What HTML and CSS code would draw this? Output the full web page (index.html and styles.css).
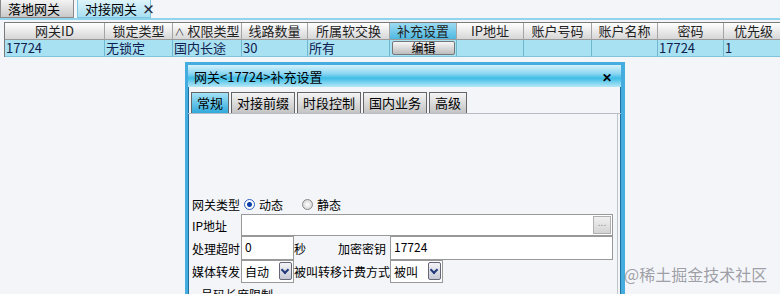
FILE: index.html
```html
<!DOCTYPE html>
<html lang="zh-CN">
<head>
  <meta charset="UTF-8" />
  <title>对接网关</title>
  <link rel="stylesheet" href="styles.css">
</head>
<body>

  <div class="page-tabs">
    <div class="page-tab">落地网关</div>
    <div class="page-tab active">对接网关 <span class="tab-close">×</span></div>
  </div>

  <div class="grid">
    <div class="head">网关ID</div>
    <div class="head">锁定类型</div>
    <div class="head"><span class="sort">∧</span> 权限类型</div>
    <div class="head">线路数量</div>
    <div class="head">所属软交换</div>
    <div class="head selected">补充设置</div>
    <div class="head">IP地址</div>
    <div class="head">账户号码</div>
    <div class="head">账户名称</div>
    <div class="head">密码</div>
    <div class="head">优先级</div>

    <div class="cell">17724</div>
    <div class="cell">无锁定</div>
    <div class="cell">国内长途</div>
    <div class="cell">30</div>
    <div class="cell">所有</div>
    <div class="cell btn-cell"><button class="edit-btn">编辑</button></div>
    <div class="cell"></div>
    <div class="cell"></div>
    <div class="cell"></div>
    <div class="cell">17724</div>
    <div class="cell">1</div>
  </div>

  <div class="dialog">
    <div class="dialog-title">
      <span>网关&lt;17724&gt;补充设置</span>
      <span class="dialog-close">✕</span>
    </div>

    <div class="dialog-tabs">
      <div class="dtab active">常规</div>
      <div class="dtab">对接前缀</div>
      <div class="dtab">时段控制</div>
      <div class="dtab">国内业务</div>
      <div class="dtab">高级</div>
    </div>

    <div class="dialog-body">
      <div class="form-row radio-row">
        <span class="label">网关类型</span>
        <span class="radio checked"></span><span>动态</span>
        <span class="radio gap"></span><span>静态</span>
      </div>
      <div class="form-row">
        <span class="label">IP地址</span>
        <div class="field wide"><span class="more">...</span></div>
      </div>
      <div class="form-row">
        <span class="label">处理超时</span>
        <div class="field short">0</div>
        <span class="unit">秒</span>
        <span class="label key-label">加密密钥</span>
        <div class="field key">17724</div>
      </div>
      <div class="form-row">
        <span class="label">媒体转发</span>
        <div class="select">自动<span class="drop"></span></div>
        <span class="label long-label">被叫转移计费方式</span>
        <div class="select">被叫<span class="drop"></span></div>
      </div>
      <div class="form-row cut">
        <span class="label indent">号码长度限制</span>
      </div>
    </div>
  </div>

  <div class="watermark">@稀土掘金技术社区</div>

</body>
</html>
```

FILE: styles.css
```css
body {
  margin: 0;
  width: 780px;
  height: 294px;
  overflow: hidden;
  background: #f3f5f9;
  font-family: "Noto Sans CJK SC", "Liberation Sans", sans-serif;
  font-size: 12px;
  color: #000;
  position: relative;
}

/* top tabs */
.page-tabs {
  display: flex;
  gap: 3px;
  height: 18px;
  border-bottom: 2px solid #8fd3ec;
}

.page-tab {
  width: 74px;
  height: 18px;
  line-height: 18px;
  box-sizing: border-box;
  padding-left: 7px;
  font-size: 13px;
  white-space: nowrap;
  border: 1px solid #8a8a8a;
  border-top: none;
  background: linear-gradient(#f4f4f4, #c9c9c9);
}

.page-tab.active {
  background: linear-gradient(#dff4fb, #a9e0f2);
  border-color: #7cc6e2;
}

.tab-close {
  font-weight: bold;
  margin-left: 2px;
  color: #223;
}

/* gateway grid */
.grid {
  display: grid;
  grid-template-columns: 100px 68px 69px 66px 82px 67px 67px 68px 66px 66px 60px;
  margin: 2px 0 0 4px;
  border-top: 1px solid #7a7a7a;
  border-left: 1px solid #7a7a7a;
}

.head {
  height: 16px;
  line-height: 16px;
  text-align: center;
  font-size: 13px;
  color: #222;
  background: linear-gradient(#ffffff, #d6d6d6);
  border-right: 1px solid #a5a5a5;
  border-bottom: 1px solid #9a9a9a;
}

.head.selected {
  background: linear-gradient(#9edcf2, #4db8e2);
}

.sort {
  font-size: 10px;
  color: #444;
}

.cell {
  height: 16px;
  line-height: 16px;
  padding-left: 1px;
  font-size: 13px;
  color: #102050;
  background: #a8e2f2;
  border-right: 1px solid #6fb8d0;
  border-bottom: 1px solid #7fc4da;
}

.btn-cell {
  display: flex;
  justify-content: center;
  align-items: center;
}

.edit-btn {
  width: 63px;
  height: 14px;
  padding: 0;
  font-family: inherit;
  font-size: 12px;
  line-height: 12px;
  border: 1px solid #777;
  border-radius: 2px;
  background: linear-gradient(#f6f6f6, #bdbdbd);
}

/* dialog */
.dialog {
  position: absolute;
  left: 185px;
  top: 62px;
  width: 433px;
  height: 250px;
  border: 3px solid #45ace0;
  border-right-width: 4px;
  box-shadow: inset 0 0 0 1px #1e6f9c;
  background: #f3f5f9;
}

.dialog-title {
  display: flex;
  justify-content: space-between;
  align-items: center;
  height: 22px;
  padding: 0 9px 0 6px;
  font-size: 13px;
  background: linear-gradient(#d6f1fb, #8ad6f2 40%, #3fbde6 60%, #b6e8f7);
}

.dialog-close {
  font-weight: bold;
  font-size: 12px;
}

.dialog-tabs {
  display: flex;
  gap: 2px;
  margin-top: 5px;
  padding-left: 3px;
  border-bottom: 1px solid #b8bcc4;
}

.dtab {
  height: 20px;
  line-height: 20px;
  padding: 0 5px;
  font-size: 13px;
  border: 1px solid #666;
  border-bottom: none;
  background: linear-gradient(#f4f4f4, #c3c3c3);
}

.dtab.active {
  background: linear-gradient(#a4e2f6, #2fa9dc);
}

.dialog-body {
  height: 200px;
  padding: 81px 0 0 4px;
  border-right: 1px solid #c0c4cc;
  margin-right: 3px;
  box-sizing: border-box;
}

.form-row {
  display: flex;
  align-items: center;
  height: 22px;
  margin-bottom: 1px;
  font-size: 12px;
}

.radio-row {
  height: 18px;
  margin-bottom: 1px;
}

.label {
  width: 49px;
  flex: none;
  white-space: nowrap;
}

.key-label {
  width: auto;
  margin-left: 30px;
  margin-right: 4px;
}

.long-label {
  width: 96px;
}

.radio {
  width: 9px;
  height: 9px;
  margin: 0 4px 0 3px;
  border-radius: 50%;
  border: 1px solid #888;
  background: radial-gradient(#fff, #c8c8c8);
}

.radio.checked {
  background: radial-gradient(#0d3fa8 0 2px, #fff 3px);
  border-color: #2a5dc0;
}

.radio.gap {
  margin-left: 19px;
}

.field {
  height: 22px;
  box-sizing: border-box;
  border: 1px solid #999;
  background: #fff;
  padding-left: 3px;
  line-height: 20px;
}

.field.wide {
  width: 372px;
  display: flex;
  justify-content: flex-end;
  padding: 1px;
}

.more {
  width: 18px;
  height: 18px;
  line-height: 10px;
  text-align: center;
  font-size: 10px;
  color: #999;
  border: 1px solid #b0b0b0;
  box-sizing: border-box;
  background: linear-gradient(#f0f0f0, #d4d4d4);
}

.field.short {
  width: 53px;
  height: 24px;
}

.field.key {
  width: 223px;
  height: 24px;
}

.unit {
  width: 14px;
}

.select {
  display: flex;
  justify-content: space-between;
  align-items: center;
  width: 53px;
  height: 23px;
  box-sizing: border-box;
  padding: 0 1px 0 3px;
  border: 1px solid #999;
  background: #fff;
}

.drop {
  width: 13px;
  height: 18px;
  box-sizing: border-box;
  border: 1px solid #667;
  border-radius: 2px;
  background: linear-gradient(#f4f4f8, #c6c8d4);
  position: relative;
}

.drop::after {
  content: "";
  position: absolute;
  left: 2px;
  top: 4px;
  width: 4px;
  height: 4px;
  border-right: 2px solid #223a7a;
  border-bottom: 2px solid #223a7a;
  transform: rotate(45deg);
}

.indent {
  padding-left: 9px;
  width: auto;
}

.watermark {
  position: absolute;
  left: 624px;
  top: 262px;
  font-size: 16px;
  color: rgba(120, 120, 130, 0.7);
}
```
